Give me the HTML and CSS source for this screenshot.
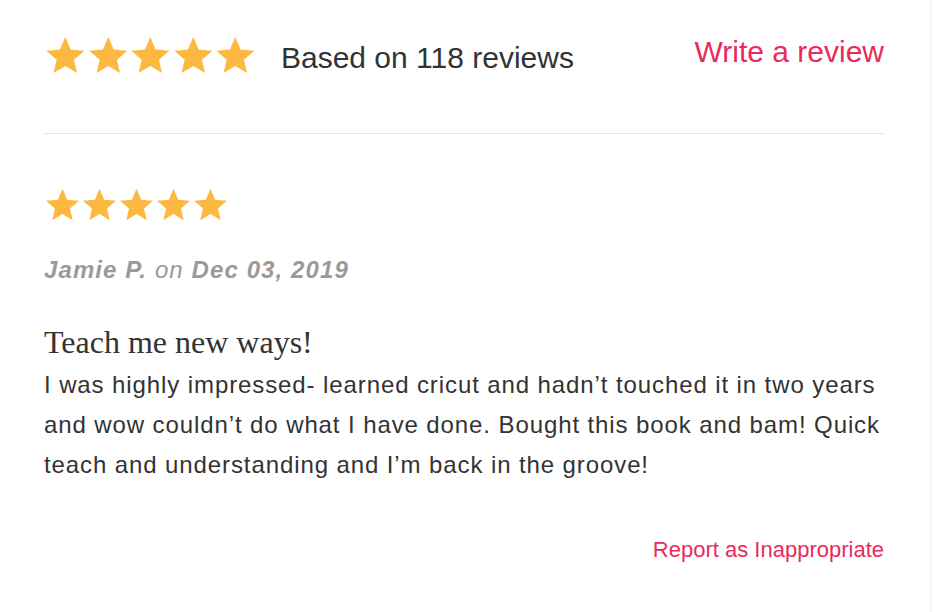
FILE: index.html
```html
<!DOCTYPE html>
<html lang="en">

<head>
    <meta charset="UTF-8">
    <link rel="stylesheet" href="styles.css">
</head>

<body>
    <svg style="display: none">
        <symbol id="star" viewBox="1.5 1.5 21 20">
            <path d="M12 17.27L18.18 21l-1.64-7.03L22 9.24l-7.19-.61L12 2 9.19 8.63 2 9.24l5.46 4.73L5.82 21z" />
        </symbol>
    </svg>

    <div class="reviews">
        <div class="summary">
            <div class="stars stars-big">
                <svg><use href="#star" /></svg>
                <svg><use href="#star" /></svg>
                <svg><use href="#star" /></svg>
                <svg><use href="#star" /></svg>
                <svg><use href="#star" /></svg>
            </div>
            <span class="count">Based on 118 reviews</span>
            <a class="write-link" href="#">Write a review</a>
        </div>

        <div class="review">
            <div class="stars stars-small">
                <svg><use href="#star" /></svg>
                <svg><use href="#star" /></svg>
                <svg><use href="#star" /></svg>
                <svg><use href="#star" /></svg>
                <svg><use href="#star" /></svg>
            </div>
            <div class="author"><b>Jamie P.</b> on <b>Dec 03, 2019</b></div>
            <h3 class="review-title">Teach me new ways!</h3>
            <p class="review-body">I was highly impressed- learned cricut and hadn’t touched it in two years and wow couldn’t do what I have done. Bought this book and bam! Quick teach and understanding and I’m back in the groove!</p>
            <div class="review-footer">
                <a class="report-link" href="#">Report as Inappropriate</a>
            </div>
        </div>
    </div>
</body>

</html>
```

FILE: styles.css
```css
body {
    margin: 0;
    background: #fff;
    font-family: "Liberation Sans", Arial, sans-serif;
    color: #333;
}

a {
    text-decoration: none;
}

.reviews {
    width: 840px;
    padding: 0 46px 0 44px;
    min-height: 612px;
    border-right: 1px solid #f1f1f1;
}

.summary {
    display: flex;
    align-items: flex-start;
    padding: 36px 0 58px;
    border-bottom: 1px solid #e6e6e6;
}

.stars {
    display: flex;
    fill: #fdb842;
}

.stars-big svg {
    width: 42.6px;
    height: 38px;
}

.stars-small svg {
    width: 37px;
    height: 33px;
}

.count {
    margin: 5px 0 0 24px;
    font-size: 30px;
    line-height: 34px;
    color: #333;
}

.write-link {
    margin: -1px 0 0 auto;
    font-size: 30px;
    line-height: 34px;
    color: #ea2a5c;
}

.review {
    padding-top: 54px;
}

.author {
    margin-top: 35px;
    font-size: 24px;
    font-style: italic;
    letter-spacing: 1.1px;
    color: #9a9a9a;
}

.review-title {
    margin: 40px 0 0;
    font-family: "Liberation Serif", "Times New Roman", serif;
    font-weight: normal;
    font-size: 32px;
    line-height: 36px;
    color: #333;
}

.review-body {
    margin: 5px 0 0;
    font-size: 24px;
    line-height: 40px;
    letter-spacing: 0.9px;
    color: #333;
}

.review-footer {
    display: flex;
    justify-content: flex-end;
    margin-top: 52px;
}

.report-link {
    font-size: 22px;
    color: #ea2a5c;
}
```
